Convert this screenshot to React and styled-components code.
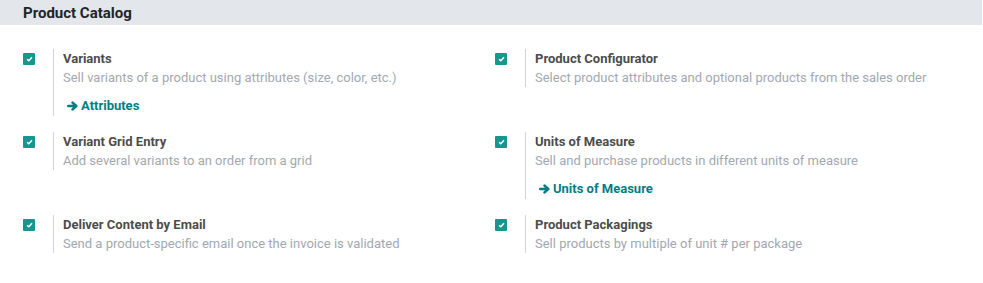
import React from "react";
import styled, { createGlobalStyle } from "styled-components";

const GlobalStyle = createGlobalStyle`
  body {
    margin: 0;
    background: #ffffff;
    font-family: Roboto, "Liberation Sans", sans-serif;
  }
`;

const Page = styled.div`
  width: 983px;
`;

const Header = styled.h2`
  margin: 0 1px 0 0;
  height: 25px;
  background: #e3e6ea;
  padding-left: 23px;
  font-size: 15px;
  font-weight: 700;
  line-height: 26px;
  color: #212529;
`;

const Grid = styled.div`
  display: grid;
  grid-template-columns: 472px 1fr;
  row-gap: 16px;
  padding: 24px 0 0 23px;
`;

const Box = styled.div`
  display: flex;
  align-items: flex-start;
`;

const LeftPane = styled.div`
  width: 30px;
  flex: none;
  padding-top: 4px;
`;

const Check = styled.span`
  display: flex;
  align-items: center;
  justify-content: center;
  width: 12px;
  height: 12px;
  border-radius: 1px;
  background: #17958f;
`;

const RightPane = styled.div`
  border-left: 1px solid #ced4da;
  padding-left: 9px;
  font-size: 13px;
`;

const Title = styled.div`
  font-weight: 700;
  line-height: 19px;
  color: #4c4c4c;
`;

const Desc = styled.div`
  line-height: 19px;
  color: #a3a8b0;
`;

const Link = styled.a`
  display: flex;
  align-items: center;
  gap: 3px;
  margin: 9px 0 0 4px;
  line-height: 20px;
  font-weight: 700;
  color: #017e84;
  text-decoration: none;
`;

const settings = [
  { title: "Variants", desc: "Sell variants of a product using attributes (size, color, etc.)", link: "Attributes" },
  { title: "Product Configurator", desc: "Select product attributes and optional products from the sales order" },
  { title: "Variant Grid Entry", desc: "Add several variants to an order from a grid" },
  { title: "Units of Measure", desc: "Sell and purchase products in different units of measure", link: "Units of Measure" },
  { title: "Deliver Content by Email", desc: "Send a product-specific email once the invoice is validated" },
  { title: "Product Packagings", desc: "Sell products by multiple of unit # per package" },
];

const CheckMark = () => (
  <svg width="7" height="6" viewBox="0 0 7 6">
    <path d="M1 3.2 L2.8 4.8 L6 1.2" fill="none" stroke="#fff" strokeWidth="1.4" />
  </svg>
);

const Arrow = () => (
  <svg width="11" height="10" viewBox="0 0 11 10">
    <path
      d="M1.3 5 H8.6 M5.6 1.6 L9.2 5 L5.6 8.4"
      fill="none"
      stroke="currentColor"
      strokeWidth="2.6"
      strokeLinecap="round"
      strokeLinejoin="round"
    />
  </svg>
);

const App = () => {
  return (
    <Page>
      <GlobalStyle />
      <Header>Product Catalog</Header>
      <Grid>
        {settings.map((s) => (
          <Box key={s.title}>
            <LeftPane>
              <Check>
                <CheckMark />
              </Check>
            </LeftPane>
            <RightPane>
              <Title>{s.title}</Title>
              <Desc>{s.desc}</Desc>
              {s.link && (
                <Link href="#">
                  <Arrow />
                  {s.link}
                </Link>
              )}
            </RightPane>
          </Box>
        ))}
      </Grid>
    </Page>
  );
};

export default App;
